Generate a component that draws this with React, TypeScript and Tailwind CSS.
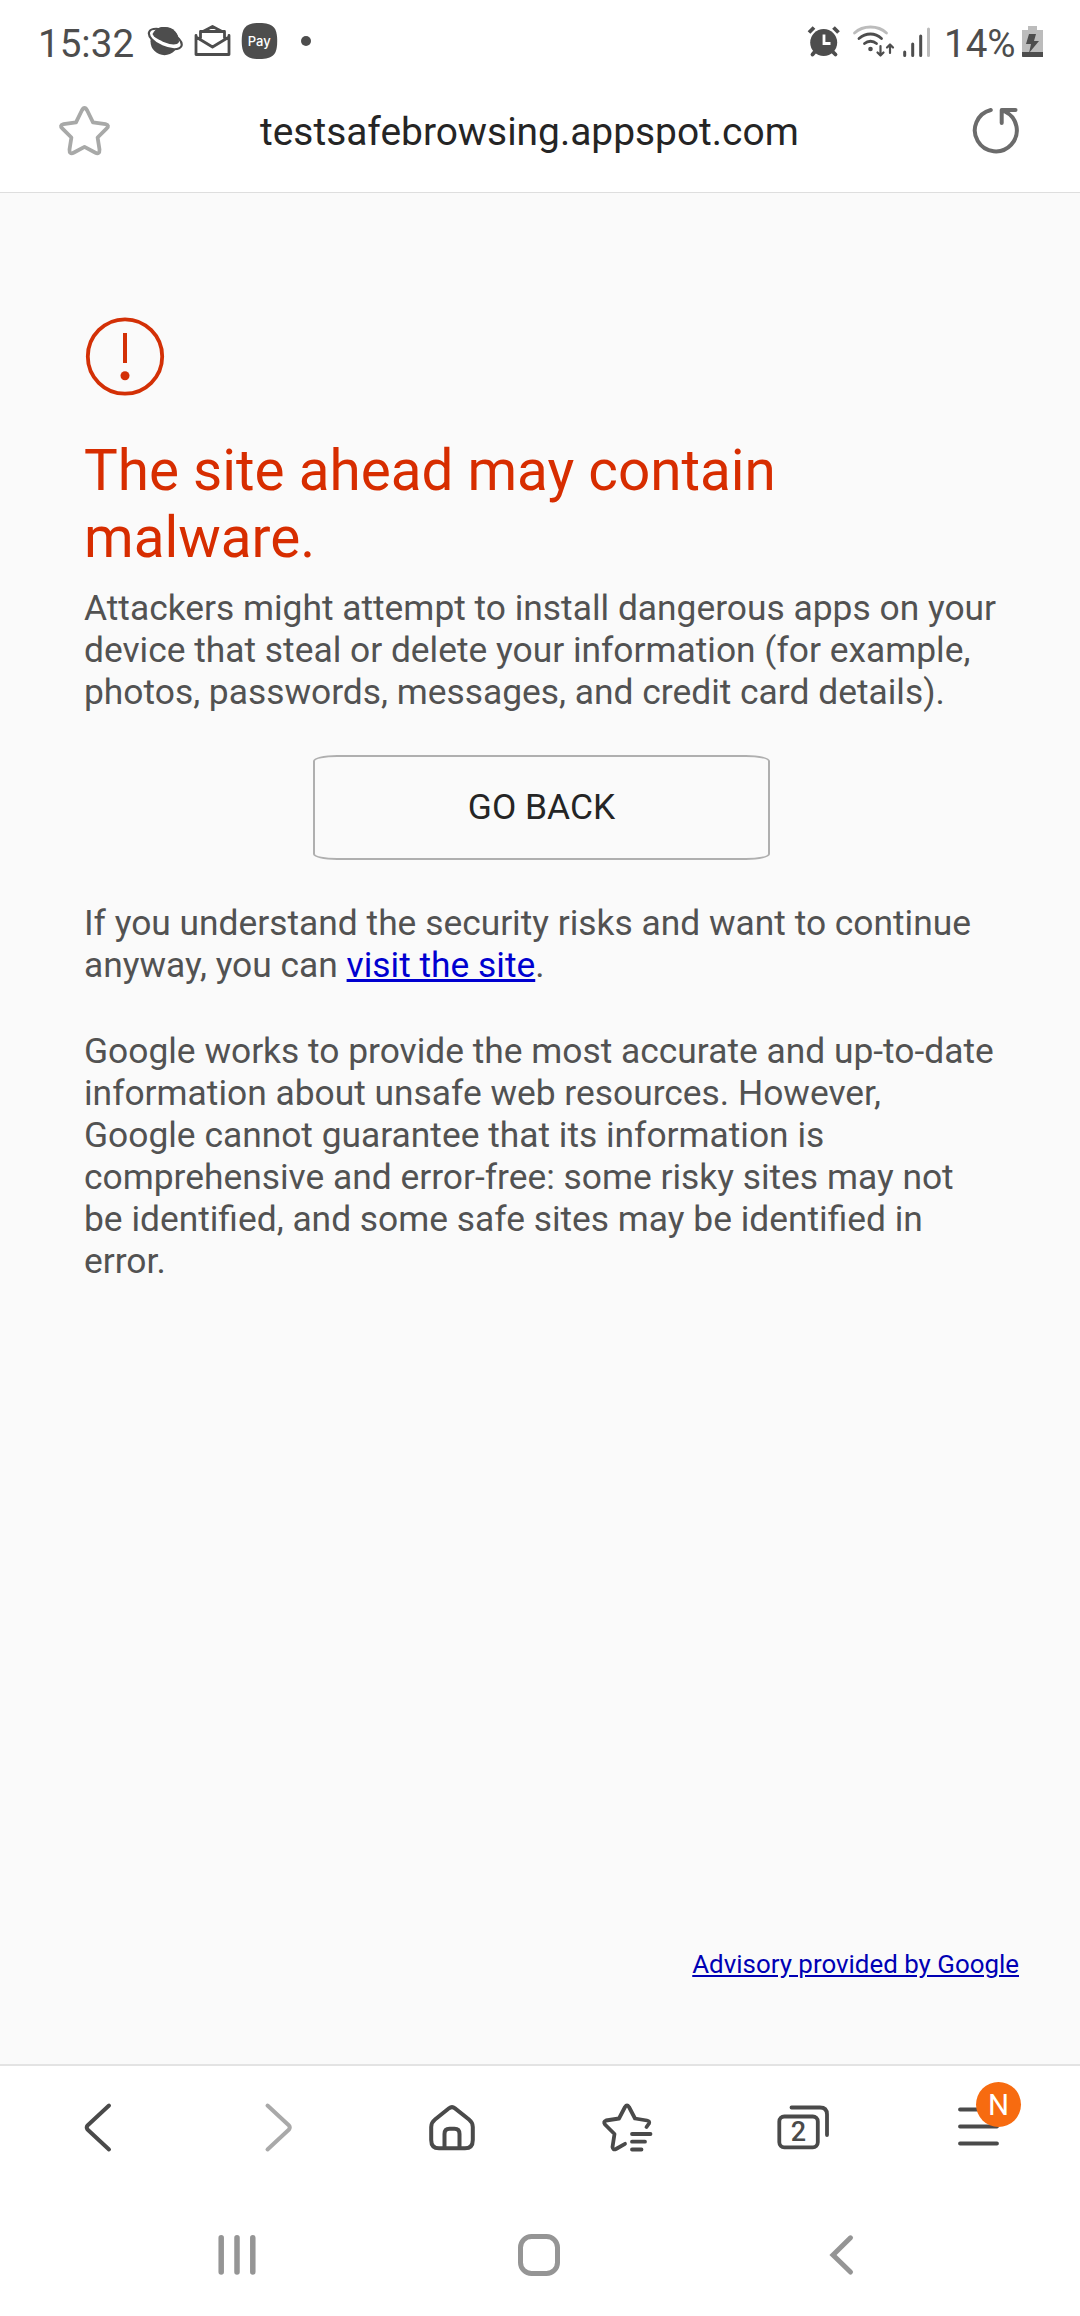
import React from "react";

type IconProps = { box: string; className: string; children: React.ReactNode };

function Icon({ box, className, children }: IconProps) {
  return (
    <svg viewBox={box} className={className} fill="none" stroke="currentColor" strokeLinecap="round" strokeLinejoin="round">
      {children}
    </svg>
  );
}

function StatusBar() {
  return (
    <div className="flex h-[84px] items-start text-[#4d4d4d]">
      <span className="ml-[38px] mt-[21px] w-[109px] whitespace-nowrap text-[38.6px] leading-[46px]">15:32</span>
      <Icon box="147 20 170 44" className="h-[44px] w-[170px] mt-[20px] shrink-0">
        <circle cx="164.500" cy="41.200" r="14" fill="currentColor" stroke="none" />
        <ellipse cx="165.300" cy="39" rx="17.600" ry="8" transform="rotate(24 165.300 39)" fill="#fff" stroke="currentColor" strokeWidth="2.200" />
        <path d="M152.500 34C156 27 161 27 165 27C173 27 179 33 179 42C177 45.500 171 45 165 42.500C158 39.500 153.500 37 152.500 34Z" fill="currentColor" stroke="none" />
        <path d="M196 35.500V54.500H229V35.500M196 37L212.500 47L229 37M200.500 38V31.500H224.500V38M203 31.500L212.500 26.500L222 31.500" strokeWidth="2.800" />
        <path d="M259.500 23C273 23 277.200 27.500 277.200 41C277.200 54.500 273 59 259.500 59C246 59 241.700 54.500 241.700 41C241.700 27.500 246 23 259.500 23Z" fill="currentColor" stroke="none" />
        <text x="259.300" y="45.500" textAnchor="middle" fontSize="13" fontWeight="500" fill="#fff" stroke="none" className="font-['Inter',sans-serif]">Pay</text>
        <circle cx="306" cy="41" r="5" fill="currentColor" stroke="none" />
      </Icon>
      <Icon box="800 20 140 44" className="ml-auto mt-[20px] h-[44px] w-[140px] shrink-0">
        <circle cx="823.700" cy="42.500" r="13.500" fill="currentColor" stroke="none" />
        <path d="M809 32.500L814 27.500M838.500 32.500L833.500 27.500" strokeWidth="3.800" strokeLinecap="butt" />
        <path d="M812.500 54.500L815 51.500M835.500 54.500L832.500 51.500" strokeWidth="3.800" />
        <path d="M824 34.500V43.500H830.500" stroke="#fff" strokeWidth="2.800" strokeLinecap="butt" strokeLinejoin="miter" />
        <path d="M854.500 33C863 25 878 25 886.500 33" stroke="#bcbcbc" strokeWidth="2.800" />
        <path d="M859 38.500C866 32.500 875 32.500 881.500 38.500" strokeWidth="2.800" />
        <path d="M864.500 43.500C868 40.500 873 40.500 876.500 43.500" strokeWidth="2.800" />
        <circle cx="870.500" cy="49" r="2.300" fill="currentColor" stroke="none" />
        <path d="M880.500 46V55M877.500 52.500L880.500 55.500L883.500 52.500M890 53V44.500M887 47.500L890 44.500L893 47.500" strokeWidth="2.200" />
        <path d="M904.700 52V55.500M912.700 44V55.500M920.700 36V55.500" strokeWidth="3" />
        <path d="M928.500 29V55.500" stroke="#bcbcbc" strokeWidth="3" />
      </Icon>
      <span className="ml-[4px] mt-[21px] w-[76px] whitespace-nowrap text-[38.6px] leading-[46px]">14%</span>
      <Icon box="1020 20 24 44" className="mr-[36px] mt-[20px] h-[44px] w-[24px] shrink-0">
        <path d="M1028 26H1037V30H1043V57H1022V30H1028Z" fill="#bcbcbc" stroke="none" />
        <path d="M1022 52H1043V57H1023Q1022 57 1022 56Z" fill="currentColor" stroke="none" />
        <path d="M1029 34H1036L1034 41H1039L1029 53L1031 44H1026Z" fill="currentColor" stroke="none" />
      </Icon>
    </div>
  );
}

function AddressBar() {
  return (
    <div className="flex h-[109px] items-center border-b border-[#dedede]">
      <Icon box="55 100 60 60" className="mb-[16px] ml-[55px] h-[60px] w-[60px] text-[#a8a9a8]">
        <path d="M81.800 110.500Q84.500 105.500 87.200 110.500L93 122.300L105.500 124.200Q110 125.200 106.500 128.600L97.600 137.500L99.500 149.500Q99.800 155 95 152.500L84.500 146.800L74 152.500Q69.200 155 69.500 149.500L71.400 137.500L62.500 128.600Q59 125.200 63.500 124.200L76 122.300Z" strokeWidth="3.800" />
      </Icon>
      <h2 className="mb-[12px] ml-[145px] whitespace-nowrap text-[38.9px] leading-[46px] text-[#252525]">testsafebrowsing.appspot.com</h2>
      <Icon box="965 100 60 60" className="mb-[16px] ml-auto mr-[55px] h-[60px] w-[60px] text-[#6b6b6b]">
        <path d="M990.800 110A21 21 0 1 0 1005 111.500M1001.700 123V110H1015.500" strokeWidth="4" />
      </Icon>
    </div>
  );
}

function Warning() {
  return (
    <main className="flex h-[1871px] flex-col bg-[#fafafa] text-[35.36px] leading-[42px] text-[#525252]">
      <Icon box="84 316 82 82" className="ml-[84px] mt-[123px] h-[82px] w-[82px] shrink-0 text-[#d33006]">
        <circle cx="125" cy="356.500" r="37.200" strokeWidth="3.800" />
        <path d="M125 333V363" strokeWidth="4" strokeLinecap="butt" />
        <circle cx="125" cy="375.700" r="4.500" fill="currentColor" stroke="none" />
      </Icon>
      <h1 className="ml-[84px] mt-[39px] text-[56.64px] leading-[67px] text-[#d72d00]">
        The site ahead may contain
        <br />
        malware.
      </h1>
      <p className="ml-[84px] mt-[16px] whitespace-nowrap">
        Attackers might attempt to install dangerous apps on your
        <br />
        device that steal or delete your information (for example,
        <br />
        photos, passwords, messages, and credit card details).
      </p>
      <button className="ml-[313px] mt-[42px] h-[105px] w-[457px] shrink-0 rounded-[24px/6px] border-2 border-[#afafaf] pb-[2px] text-[#252525]">GO BACK</button>
      <p className="ml-[84px] mt-[42px] whitespace-nowrap">
        If you understand the security risks and want to continue
        <br />
        anyway, you can <a className="text-[#0000d0] underline">visit the site</a>.
      </p>
      <p className="ml-[84px] mt-[44px] whitespace-nowrap">
        Google works to provide the most accurate and up-to-date
        <br />
        information about unsafe web resources. However,
        <br />
        Google cannot guarantee that its information is
        <br />
        comprehensive and error-free: some risky sites may not
        <br />
        be identified, and some safe sites may be identified in
        <br />
        error.
      </p>
      <a className="mb-[84px] mr-[61px] mt-auto self-end text-[25.9px] leading-[32px] text-[#0000b4] underline">Advisory provided by Google</a>
    </main>
  );
}

function Toolbar() {
  return (
    <nav className="flex h-[130px] items-center border-t-2 border-[#e3e3e3] pb-[4px] text-[#4a4a4a]">
      <Icon box="70 2090 60 76" className="ml-[70px] h-[76px] w-[60px]">
        <path d="M109 2105.500L87.500 2125.500Q86 2127.500 87.500 2129.500L109 2149.500" strokeWidth="4" />
      </Icon>
      <Icon box="250 2090 60 76" className="ml-[120px] h-[76px] w-[60px] text-[#a9a9a9]">
        <path d="M267.500 2105.500L289 2125.500Q290.500 2127.500 289 2129.500L267.500 2149.500" strokeWidth="4" />
      </Icon>
      <Icon box="420 2090 64 76" className="ml-[110px] h-[76px] w-[64px]">
        <path d="M449 2108.300Q452 2106 455 2108.300L469 2119.500Q472.800 2122.500 472.800 2127V2140Q472.800 2148.300 465 2148.300H439Q431.200 2148.300 431.200 2140V2127Q431.200 2122.500 435 2119.500ZM444.500 2147.500V2134Q444.500 2128.700 449.500 2128.700H454.500Q459.500 2128.700 459.500 2134V2147.500" strokeWidth="4" />
      </Icon>
      <Icon box="595 2090 64 76" className="ml-[111px] h-[76px] w-[64px]">
        <path d="M646.500 2127L649 2123.500Q650 2121 647 2120.500L635 2118.500L629 2107Q627 2104 625 2107L619 2118.500L606 2120.500Q603 2121.500 605 2124.500L614.500 2134L612.500 2147Q613 2150.500 616 2149L625 2143.800M632 2134H650.500M632 2141.700H645M632 2149.500H641.500" strokeWidth="3.800" />
      </Icon>
      <Icon box="770 2090 64 76" className="ml-[111px] h-[76px] w-[64px]">
        <rect x="779.300" y="2116.500" width="38.500" height="30.800" rx="5" strokeWidth="3.800" />
        <path d="M791.500 2107.500H820Q827 2107.500 827 2114.500V2135" strokeWidth="3.800" />
        <text x="798.500" y="2141" textAnchor="middle" fontSize="27" fontWeight="500" fill="currentColor" stroke="none">2</text>
      </Icon>
      <div className="relative ml-[116px]">
        <Icon box="950 2090 80 76" className="h-[76px] w-[80px]">
          <path d="M960 2109.500H997M960 2126.500H997M960 2143.500H997" strokeWidth="3.800" />
        </Icon>
        <span className="absolute left-[26px] top-[-8px] flex h-[45px] w-[45px] items-center justify-center rounded-full bg-[#f76b10] pt-px text-[29.5px] leading-[45px] text-white">N</span>
      </div>
    </nav>
  );
}

function SystemNav() {
  return (
    <div className="flex h-[122px] items-center text-[#959595]">
      <Icon box="200 2225 76 60" className="ml-[200px] h-[60px] w-[76px]">
        <path d="M221.200 2237.800V2272M237 2237.800V2272M252.800 2237.800V2272" strokeWidth="5.500" />
      </Icon>
      <Icon box="500 2225 76 60" className="ml-[224px] h-[60px] w-[76px]">
        <rect x="520.500" y="2236.500" width="37" height="37" rx="11" strokeWidth="5" />
      </Icon>
      <Icon box="800 2225 76 60" className="ml-[224px] h-[60px] w-[76px]">
        <path d="M850.500 2237.800L833 2255L850.500 2272" strokeWidth="5" strokeLinejoin="miter" />
      </Icon>
    </div>
  );
}

export default function App() {
  return (
    <div className="flex h-[2316px] w-[1080px] flex-col overflow-hidden bg-white font-['Roboto',sans-serif]">
      <StatusBar />
      <AddressBar />
      <Warning />
      <Toolbar />
      <SystemNav />
    </div>
  );
}
